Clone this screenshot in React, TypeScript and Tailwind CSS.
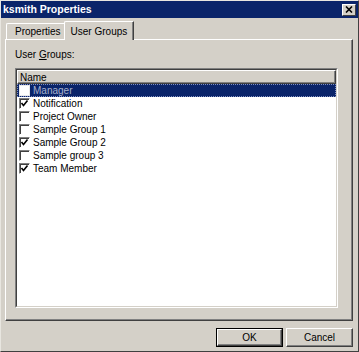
import React from 'react'

const groups = [
  { name: 'Manager', checked: false, selected: true },
  { name: 'Notification', checked: true },
  { name: 'Project Owner', checked: false },
  { name: 'Sample Group 1', checked: false },
  { name: 'Sample Group 2', checked: true },
  { name: 'Sample group 3', checked: false },
  { name: 'Team Member', checked: true },
]

function CheckBox({ checked, selected }: { checked: boolean; selected?: boolean }) {
  return (
    <div
      className={
        selected
          ? 'w-[11px] h-[11px] bg-white border border-[#e8e8e8] shrink-0'
          : 'w-[11px] h-[11px] bg-white border border-t-[#808080] border-l-[#808080] border-r-white border-b-white shadow-[inset_1px_1px_0_#404040] shrink-0'
      }
    >
      {checked && (
        <svg width="9" height="9" viewBox="0 0 9 9" className="block">
          <path d="M1.5 4 L3.5 6.5 L7.5 1.5" fill="none" stroke="#000" strokeWidth="1.6" />
        </svg>
      )}
    </div>
  )
}

export default function App() {
  return (
    <div
      className="w-[359px] h-[352px] bg-[#d4d0c8] flex flex-col text-[10px] text-black border-l border-t border-l-[#e8e6e0] border-t-[#e8e6e0] border-r border-b border-r-[#404040] border-b-[#404040]"
      style={{ fontFamily: '"Liberation Sans", Arial, sans-serif' }}
    >
      {/* title bar */}
      <div className="h-[17px] bg-[#0a246a] flex items-center justify-between pl-[2px] pr-[2px]">
        <span className="text-white font-bold text-[10.5px] leading-none">ksmith Properties</span>
        <button className="w-[14px] h-[12px] bg-[#d4d0c8] border border-t-white border-l-white border-r-[#404040] border-b-[#404040] flex items-center justify-center">
          <svg width="8" height="7" viewBox="0 0 8 7">
            <path d="M1 0.5 L7 6.5 M7 0.5 L1 6.5" stroke="#000" strokeWidth="1.6" />
          </svg>
        </button>
      </div>

      {/* tabs */}
      <div className="flex items-end pl-[5px] mt-[2px] h-[19px]">
        <div className="h-[16px] pl-[8px] pr-[4px] flex items-center border-t border-l border-t-white border-l-white border-r border-r-[#808080] rounded-tl-[2px]">
          Properties
        </div>
        <div className="h-[19px] px-[6px] -ml-[2px] -mb-px relative z-10 bg-[#d4d0c8] flex items-center border-t border-l border-t-white border-l-white border-r border-r-[#404040] shadow-[inset_-1px_0_0_#808080] rounded-tl-[2px]">
          User Groups
        </div>
      </div>

      {/* panel */}
      <div className="ml-[4px] mr-[5px] h-[282px] border border-t-white border-l-white border-r-[#404040] border-b-[#404040] shadow-[inset_-1px_-1px_0_#808080] pt-[9px] pl-[9px] pr-[14px] pb-[12px] flex flex-col">
        <div className="h-[19px] leading-[12px]">
          User <span className="underline">G</span>roups:
        </div>
        <div className="flex-1 border border-t-[#808080] border-l-[#808080] border-r-white border-b-white">
          <div className="h-full bg-white border border-t-[#404040] border-l-[#404040] border-r-[#d4d0c8] border-b-[#d4d0c8] flex flex-col">
            <div className="h-[14px] bg-[#d4d0c8] border border-t-white border-l-white border-r-[#404040] border-b-[#404040] shadow-[inset_-1px_-1px_0_#808080] flex items-center pl-[2px]">
              Name
            </div>
            {groups.map((g) => (
              <div
                key={g.name}
                className={
                  g.selected
                    ? 'h-[13px] flex items-center gap-[3px] pl-[2px] bg-[#0a246a] text-[#a6b0cc] outline-1 outline-dotted outline-[#8090c0] -outline-offset-1'
                    : 'h-[13px] flex items-center gap-[3px] pl-[2px]'
                }
              >
                <CheckBox checked={g.checked} selected={g.selected} />
                <span className="leading-none">{g.name}</span>
              </div>
            ))}
          </div>
        </div>
      </div>

      {/* buttons */}
      <div className="flex justify-end gap-[3px] pr-[5px] mt-[7px]">
        <button className="w-[67px] h-[19px] border border-black flex items-center justify-center">
          <span className="w-full h-full border border-t-white border-l-white border-r-[#404040] border-b-[#404040] shadow-[inset_-1px_-1px_0_#808080] flex items-center justify-center">
            OK
          </span>
        </button>
        <button className="w-[67px] h-[19px] border border-t-white border-l-white border-r-[#404040] border-b-[#404040] shadow-[inset_-1px_-1px_0_#808080] flex items-center justify-center">
          Cancel
        </button>
      </div>
    </div>
  )
}
